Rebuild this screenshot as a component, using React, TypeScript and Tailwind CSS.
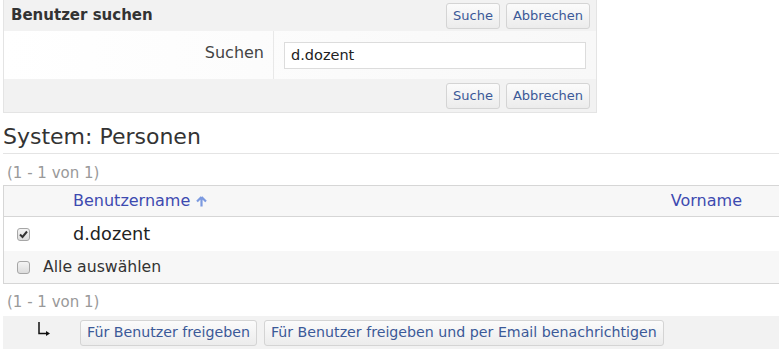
import React from 'react';

const font = { fontFamily: '"DejaVu Sans", Verdana, sans-serif' };

const Btn: React.FC<{ label: string; big?: boolean }> = ({ label, big }) => (
  <button
    className={`h-[26px] px-[6px] rounded-[3px] border border-[#d4d4d4] bg-gradient-to-b from-[#fbfbfb] to-[#ececec] text-[#3b5998] leading-none ${big ? 'text-[14.2px]' : 'text-[13px]'}`}
  >
    {label}
  </button>
);

const Box: React.FC<{ checked?: boolean }> = ({ checked }) => (
  <span className="w-[13px] h-[13px] rounded-[3px] border border-[#a6a6a6] bg-gradient-to-b from-[#f4f4f4] to-[#dcdcdc] flex items-center justify-center">
    {checked && (
      <svg width="9" height="9" viewBox="0 0 9 9">
        <path d="M1 4.5 L3.5 7 L8 1.5" stroke="#333" strokeWidth="2" fill="none" />
      </svg>
    )}
  </span>
);

export default function App() {
  return (
    <div className="w-[779px] h-[355px] bg-white text-[#333] overflow-hidden" style={font}>
      {/* Suchformular */}
      <div className="ml-[3px] w-[594px] border border-t-0 border-[#e4e4e4]">
        <div className="h-[31px] bg-[#f2f2f2] flex items-center justify-between pl-[7px] pr-[6px]">
          <span className="text-[15px] font-bold text-[#333]">Benutzer suchen</span>
          <div className="flex gap-[6px]">
            <Btn label="Suche" />
            <Btn label="Abbrechen" />
          </div>
        </div>
        <div className="h-[48px] flex bg-gradient-to-r from-white to-[#f8f8f8]">
          <div className="w-[270px] border-r border-[#e8e8e8] text-right pr-[9px] pt-[10px] text-[16px] text-[#444]">Suchen</div>
          <div className="pl-[10px] pt-[11px]">
            <div className="w-[302px] h-[27px] border border-[#dcdcdc] bg-white flex items-center px-[6px] text-[14.5px] text-[#222]">d.dozent</div>
          </div>
        </div>
        <div className="h-[33px] bg-[#f2f2f2] flex items-center justify-end pr-[6px] gap-[6px]">
          <Btn label="Suche" />
          <Btn label="Abbrechen" />
        </div>
      </div>

      {/* Liste */}
      <div className="ml-[3px]">
        <h2 className="text-[22px] text-[#333] pt-[9px] leading-[30px] h-[41px] border-b border-[#e4e4e4]">System: Personen</h2>
        <div className="text-[15px] text-[#999] pl-[4px] h-[31px] flex items-center pt-[7px]">(1 - 1 von 1)</div>
        <div className="border border-r-0 border-[#d6d6d6]">
          <div className="h-[31px] bg-[#f7f7f7] flex items-center border-b border-[#d6d6d6] text-[16px] text-[#3d4ab0]">
            <span className="pl-[69px] flex items-center gap-[6px]">
              Benutzername
              <svg width="11" height="11" viewBox="0 0 11 11">
                <path d="M5.5 1 L1 5.5 M5.5 1 L10 5.5 M5.5 1 V10.5" stroke="#7c9ae0" strokeWidth="2.2" fill="none" />
              </svg>
            </span>
            <span className="ml-auto pr-[37px]">Vorname</span>
          </div>
          <div className="h-[34px] bg-white flex items-center">
            <span className="pl-[13px]"><Box checked /></span>
            <span className="pl-[43px] text-[17.7px] text-[#222]">d.dozent</span>
          </div>
          <div className="h-[32px] bg-[#f7f7f7] flex items-center">
            <span className="pl-[13px]"><Box /></span>
            <span className="pl-[13px] text-[15.7px] text-[#333]">Alle auswählen</span>
          </div>
        </div>
        <div className="text-[15px] text-[#999] pl-[4px] h-[32px] flex items-center pt-[5px]">(1 - 1 von 1)</div>
        <div className="h-[33px] bg-[#f2f2f2] flex items-center">
          <svg className="ml-[33px] mb-[8px]" width="16" height="16" viewBox="0 0 16 16">
            <path d="M3 1 V12.5 H11" stroke="#111" strokeWidth="1.5" fill="none" />
            <path d="M10 10 L14 12.5 L10 15 Z" fill="#111" />
          </svg>
          <div className="flex gap-[7px] ml-[28px]">
            <Btn big label="Für Benutzer freigeben" />
            <Btn big label="Für Benutzer freigeben und per Email benachrichtigen" />
          </div>
        </div>
      </div>
    </div>
  );
}
